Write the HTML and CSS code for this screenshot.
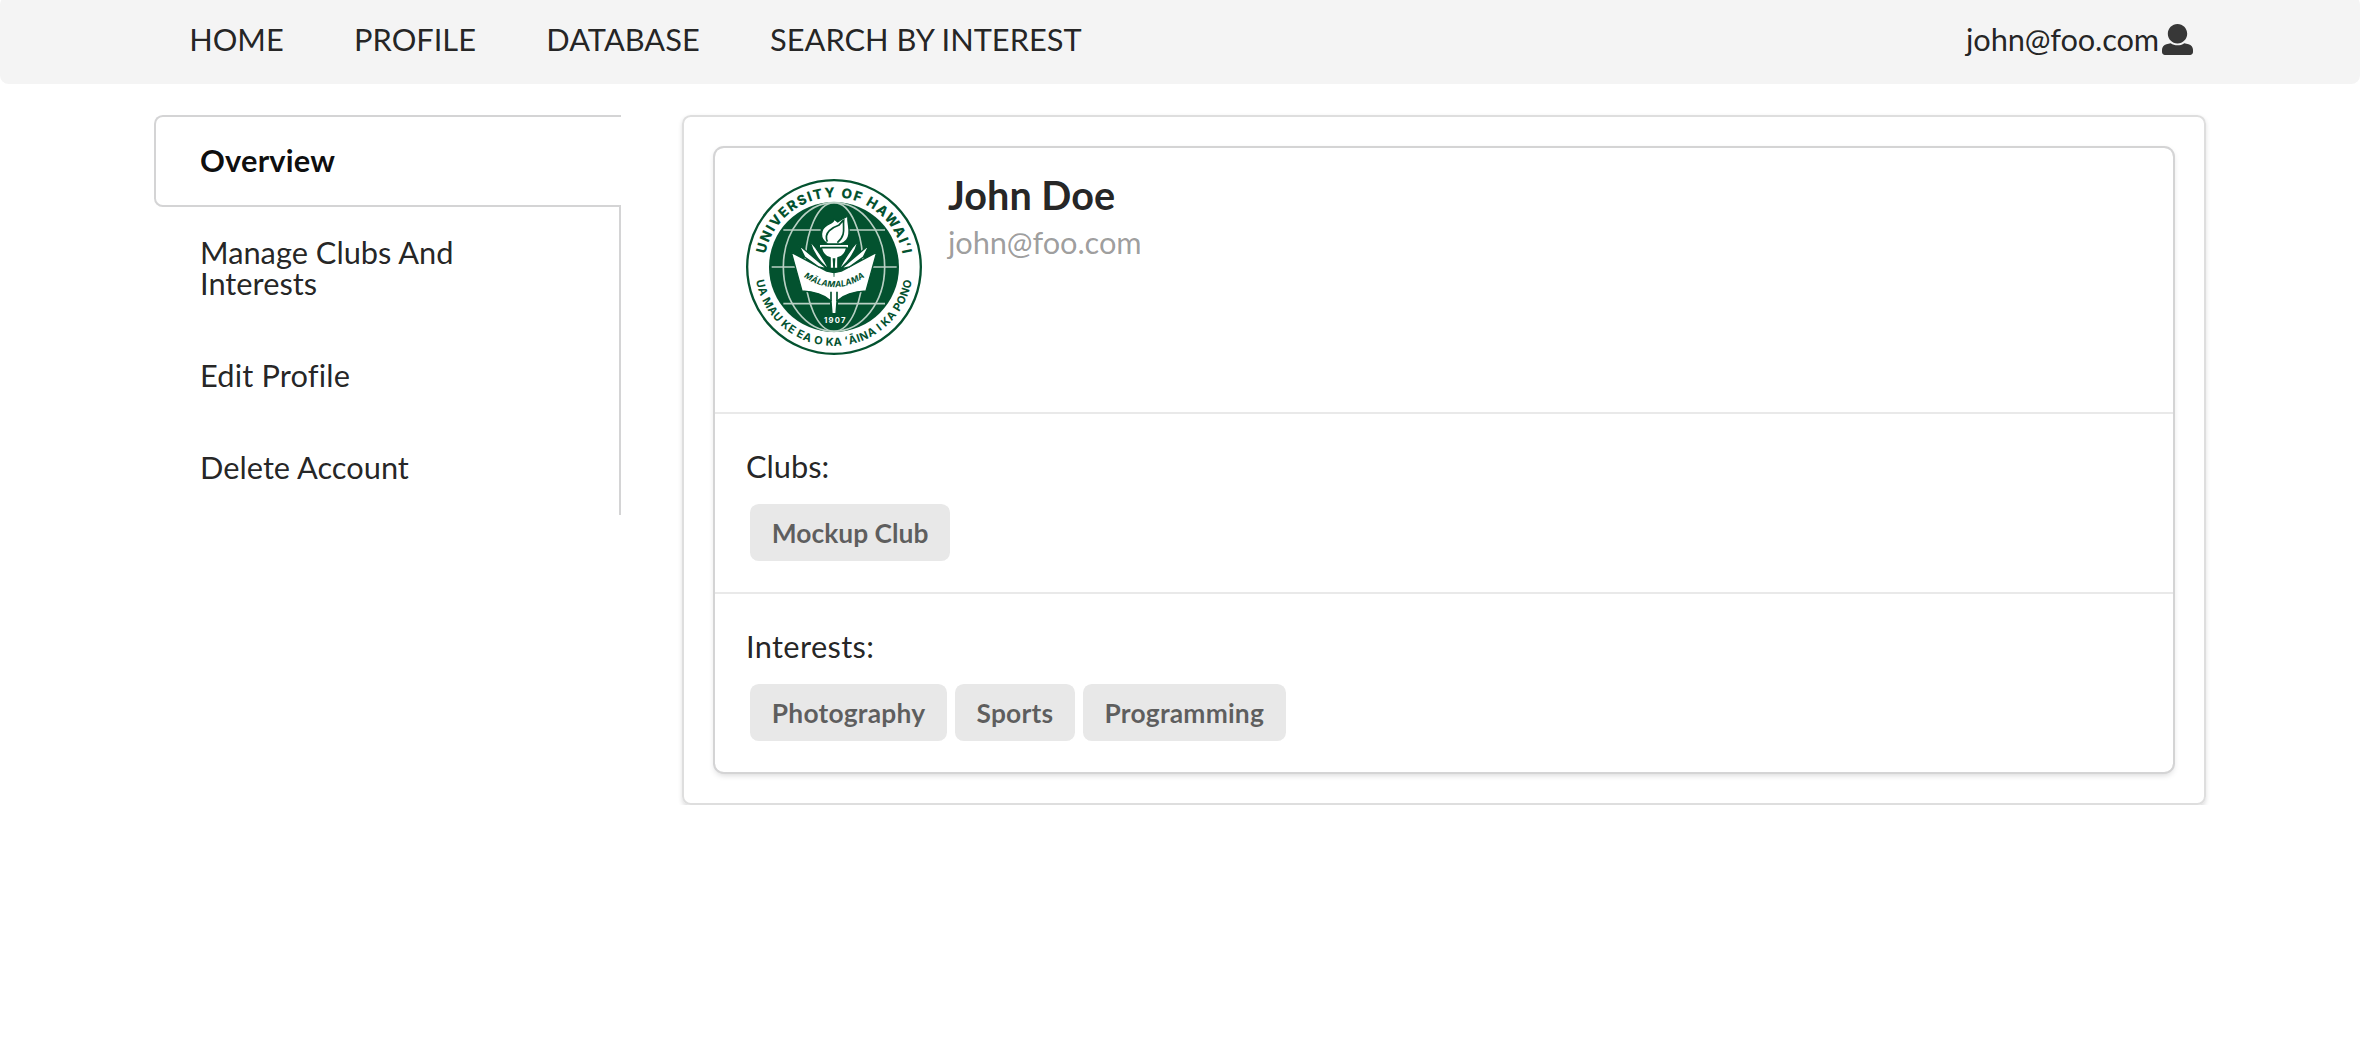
FILE: index.html
```html
<!DOCTYPE html>
<html lang="en">
<head>
<meta charset="utf-8">
<title>Profile</title>
<link rel="stylesheet" href="styles.css">
</head>
<body>
<nav class="navbar">
  <a class="nav-item">HOME</a>
  <a class="nav-item">PROFILE</a>
  <a class="nav-item">DATABASE</a>
  <a class="nav-item">SEARCH BY INTEREST</a>
  <a class="nav-item nav-user">john@foo.com<svg class="user-icon" viewBox="0 0 512 512"><path d="M256 0c88.366 0 160 71.634 160 160s-71.634 160-160 160S96 248.366 96 160 167.634 0 256 0zm183.283 333.821l-71.313-17.828c-74.923 53.89-165.738 41.864-223.94 0l-71.313 17.828C29.981 344.505 0 382.903 0 426.955V464c0 26.51 21.49 48 48 48h416c26.51 0 48-21.49 48-48v-37.045c0-44.052-29.981-82.45-72.717-93.134z"/></svg></a>
</nav>
<main class="layout">
  <aside class="side-menu">
    <a class="side-item active">Overview</a>
    <a class="side-item">Manage Clubs And Interests</a>
    <a class="side-item">Edit Profile</a>
    <a class="side-item">Delete Account</a>
  </aside>
  <section class="segment">
    <article class="card">
      <div class="card-head">
        <svg class="seal" viewBox="48 42 528 528">
          <defs>
            <path id="arc-top" d="M103 306A209 209 0 0 1 521 306"/>
            <path id="arc-bottom" d="M75 306A237 237 0 0 0 549 306"/>
            <path id="arc-book" d="M217 333Q312 400 409 333"/>
          </defs>
          <circle class="seal-ring" cx="312" cy="306" r="260.5"/>
          <circle class="seal-fill" cx="312" cy="306" r="195"/>
          <g class="seal-lines">
            <ellipse cx="312" cy="306" rx="152" ry="193"/>
            <ellipse cx="312" cy="306" rx="87" ry="193"/>
            <path d="M160 195H272M350 195H465M125 306H200M425 306H500M160 416H300M324 416H465"/>
          </g>
          <path class="seal-page" d="M184 262L290 318Q306 322 312 322Q318 322 334 318L440 262L408 378Q352 380 321 408L318 446H306L303 408Q272 380 216 378Z"/>
          <path class="seal-page" d="M206 239L292 312L266 306L224 276ZM239 227Q268 258 298 314Q254 282 239 227ZM418 239L332 312L358 306L400 276ZM385 227Q356 258 326 314Q370 282 385 227Z"/>
          <path class="seal-torch" d="M268 238H356V249H350Q344 274 324 278V310H300V278Q280 274 274 249H268Z"/>
          <path class="seal-detail" d="M274 248H350M299 280V318M325 280V318"/>
          <path class="seal-fill" d="M308 280H316L313 336H311Z"/>
          <path class="seal-detail" d="M303 380V408M321 380V408"/>
          <path class="seal-flame" d="M293 237C266 221 271 192 292 180C307 170 309 174 313 163L323 171C333 162 343 159 354 153C350 175 367 205 350 225C344 232 338 236 332 237Z"/>
          <path class="seal-detail" d="M292 230C280 201 309 187 326 181C334 173 337 168 341 166C338 188 350 209 322 233"/>
          <text class="seal-top" textLength="578"><textPath href="#arc-top" startOffset="50%" text-anchor="middle" textLength="578">UNIVERSITY OF HAWAIʻI</textPath></text>
          <text class="seal-bottom" textLength="662"><textPath href="#arc-bottom" startOffset="50%" text-anchor="middle" textLength="662">UA MAU KE EA O KA ʻĀINA I KA PONO</textPath></text>
          <text class="seal-motto"><textPath href="#arc-book" startOffset="50%" text-anchor="middle" textLength="196">MĀLAMALAMA</textPath></text>
          <rect class="seal-fill" x="279" y="454" width="68" height="24"/>
          <text class="seal-year" x="314" y="474" text-anchor="middle" textLength="64">1907</text>
        </svg>
        <div>
          <h1 class="name">John Doe</h1>
          <div class="email">john@foo.com</div>
        </div>
      </div>
      <div class="card-row">
        <div class="row-title">Clubs:</div>
        <div class="labels"><span class="label">Mockup Club</span></div>
      </div>
      <div class="card-row interests">
        <div class="row-title">Interests:</div>
        <div class="labels"><span class="label">Photography</span><span class="label">Sports</span><span class="label">Programming</span></div>
      </div>
    </article>
  </section>
</main>
</body>
</html>
```
FILE: styles.css
```css
* { box-sizing: border-box; }
body {
  margin: 0;
  background: #fff;
  color: rgba(0, 0, 0, .87);
  font: 30.8px/1.4285 Lato, "Liberation Sans", sans-serif;
  overflow: hidden;
}
.navbar {
  display: flex;
  height: 88px;
  margin-top: -4px;
  padding: 0 154px;
  background: #f4f4f4;
  border-radius: 8.8px;
}
.nav-item {
  display: flex;
  align-items: center;
  padding: 0 35.2px;
  line-height: 1;
  white-space: nowrap;
}
.nav-user { margin-left: auto; padding-right: 13px; letter-spacing: -.15px; }
.user-icon {
  width: 31px;
  height: 31px;
  margin-left: 3px;
  margin-top: -1px;
  fill: #373737;
}
.layout {
  display: flex;
  align-items: flex-start;
  gap: 61px;
  padding: 31px 154px 0;
}
.side-menu {
  width: 467px;
  border-right: 2px solid #d4d4d5;
}
.side-item {
  display: block;
  padding: 30px 90px 31px 46px;
  line-height: 31px;
}
.side-item.active {
  margin-right: -2px;
  padding: 28px 44px 29px;
  background: #fff;
  border: 2px solid #d4d4d5;
  border-right: 0;
  border-radius: 8.8px 0 0 8.8px;
  color: rgba(0, 0, 0, .95);
  font-weight: 700;
  letter-spacing: .2px;
}
.side-item:nth-child(3) { letter-spacing: .15px; }
.side-item:last-child { padding-bottom: 32px; }
.segment {
  width: 1524px;
  height: 690px;
  padding: 31px;
  border: 2px solid #dedede;
  border-radius: 8.8px;
  box-shadow: 0 2.2px 4.4px rgba(34, 36, 38, .15);
}
.card {
  height: 624px;
  border-radius: 8.8px;
  box-shadow: 0 2.2px 6.6px #d4d4d5, 0 0 0 2px #d4d4d5;
}
.card-head {
  display: flex;
  gap: 26px;
  height: 264px;
  padding: 31px;
}
.name {
  margin: -10px 0 0;
  font-size: 39.6px;
  line-height: 51px;
}
.email { color: rgba(0, 0, 0, .4); line-height: 45px; letter-spacing: -.1px; }
.card-row {
  height: 180px;
  padding: 31px;
  border-top: 2px solid #e9e9e9;
}
.row-title { line-height: 44px; }
.interests .row-title { letter-spacing: .35px; }
.interests .label { letter-spacing: .2px; }
.labels {
  display: flex;
  gap: 7.6px;
  padding: 15px 4px 0;
}
.label {
  padding: 16px 21.8px 15px;
  background: #e8e8e8;
  border-radius: 8.8px;
  color: rgba(0, 0, 0, .6);
  font-size: 26.4px;
  font-weight: 700;
  line-height: 26.4px;
}
.seal { width: 176px; height: 176px; flex: none; }
.seal-ring { fill: #fff; stroke: #03522f; stroke-width: 7; }
.seal-fill { fill: #03522f; }
.seal-lines { fill: none; stroke: #b9d0c4; stroke-width: 5; }
.seal-page { fill: #fff; stroke: #03522f; stroke-width: 4; }
.seal-torch, .seal-flame { fill: #fff; stroke: #03522f; stroke-width: 4; }
.seal-detail { fill: none; stroke: #03522f; stroke-width: 5; }
.seal-top, .seal-bottom, .seal-motto {
  fill: #03522f;
  font-family: Inter, "Noto Sans", sans-serif;
}
.seal-top { font-size: 41px; font-weight: 800; }
.seal-bottom { font-size: 33px; font-weight: 700; }
.seal-motto { font-size: 25px; font-style: italic; font-weight: 700; }
.seal-year {
  fill: #fff;
  font: 700 23px Inter, sans-serif;
}
```
